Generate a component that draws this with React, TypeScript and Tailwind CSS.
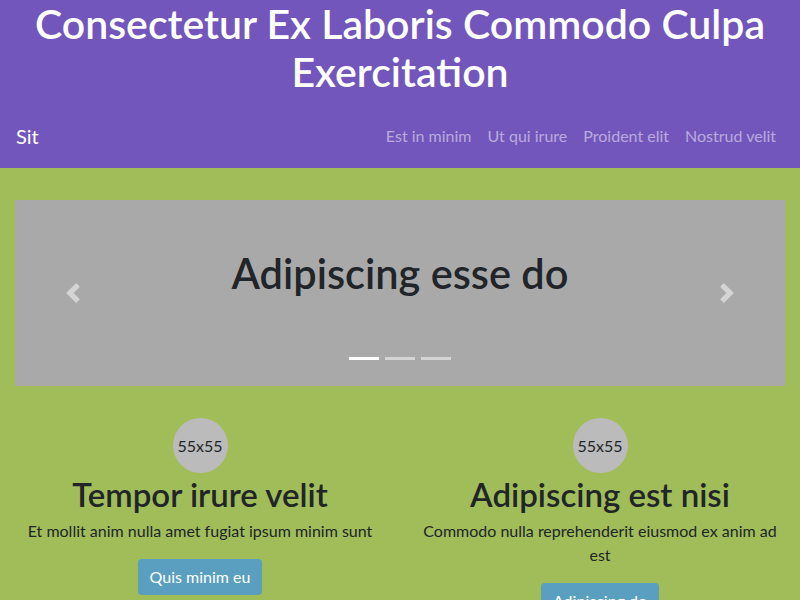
const links = ["Est in minim", "Ut qui irure", "Proident elit", "Nostrud velit"];

const features = [
  {
    title: "Tempor irure velit",
    text: "Et mollit anim nulla amet fugiat ipsum minim sunt",
    action: "Quis minim eu",
  },
  {
    title: "Adipiscing est nisi",
    text: "Commodo nulla reprehenderit eiusmod ex anim ad est",
    action: "Adipiscing do",
  },
];

function Arrow({ dir }: { dir: "prev" | "next" }) {
  return (
    <svg width="20" height="20" viewBox="0 0 8 8" className={dir === "next" ? "rotate-180" : ""}>
      <path d="M5.25 0l-4 4 4 4 1.5-1.5L4.25 4l2.5-2.5L5.25 0z" fill="#fff" fillOpacity="0.5" />
    </svg>
  );
}

export default function App() {
  return (
    <div className="min-h-[600px] bg-[#a0bd59] text-[#212529] font-['Lato',sans-serif]">
      <header className="bg-[#7356bc] text-white">
        <h1 className="px-4 mb-2 text-center text-[41px] leading-[48px] font-semibold">
          Consectetur Ex Laboris Commodo Culpa Exercitation
        </h1>
        <nav className="h-16 px-4 flex items-center justify-between">
          <span className="text-xl">Sit</span>
          <ul className="flex">
            {links.map((l) => (
              <li key={l} className="px-2 text-white/50">
                {l}
              </li>
            ))}
          </ul>
        </nav>
      </header>

      <main className="px-[15px] pt-8 pb-8">
        <div className="relative h-[186px] bg-[#a9a9a9] flex flex-col items-center pt-[49px]">
          <h2 className="text-[41.5px] leading-[48px] font-semibold">Adipiscing esse do</h2>
          <div className="absolute left-0 top-0 bottom-0 w-[15%] flex items-center justify-center">
            <Arrow dir="prev" />
          </div>
          <div className="absolute right-0 top-0 bottom-0 w-[15%] flex items-center justify-center">
            <Arrow dir="next" />
          </div>
          <div className="absolute bottom-[26px] left-0 right-0 flex justify-center gap-1.5">
            <span className="w-[30px] h-[3px] bg-white" />
            <span className="w-[30px] h-[3px] bg-white/50" />
            <span className="w-[30px] h-[3px] bg-white/50" />
          </div>
        </div>

        <div className="-mx-[15px] mt-8 grid grid-cols-2">
          {features.map((f) => (
            <div key={f.title} className="px-[15px] flex flex-col items-center text-center">
              <div className="w-[55px] h-[55px] rounded-full bg-[#bbbbbb] flex items-center justify-center">
                55x55
              </div>
              <h3 className="mt-0.5 mb-1.5 text-[33px] leading-[38px] font-semibold">{f.title}</h3>
              <p className="mb-4 leading-6">{f.text}</p>
              <button className="px-3 py-1.5 rounded bg-[#5a9fbf] text-white leading-6">{f.action}</button>
            </div>
          ))}
        </div>
      </main>
    </div>
  );
}
